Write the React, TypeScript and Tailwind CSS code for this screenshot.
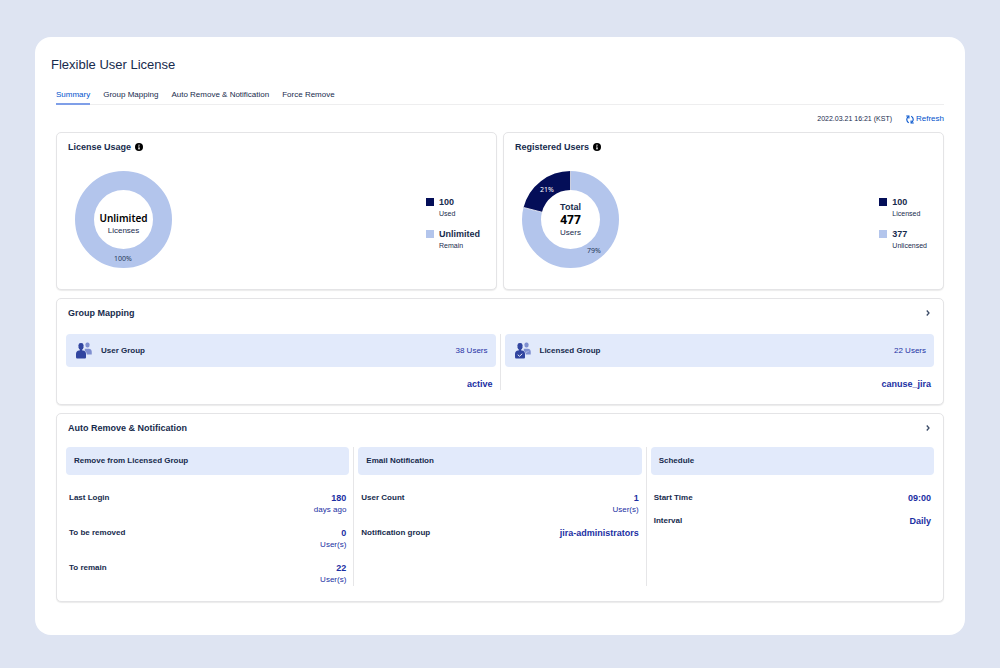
import type { ReactNode } from 'react';

type Slice = { label: string; percent: number; color: string; labelColor: string; x: number; y: number };

const SIZE = 97;
const CENTER = SIZE / 2;
const RADIUS = 39;
const THICKNESS = 19;
const LENGTH = 2 * Math.PI * RADIUS;

function Donut({ slices, title, children }: { slices: Slice[]; title: string; children: ReactNode }) {
  let offset = 0;
  return (
    <div className="relative size-[97px] shrink-0">
      <svg viewBox={`0 0 ${SIZE} ${SIZE}`} className="size-full" role="img" aria-label={title}>
        {slices.map((s) => {
          const start = offset;
          offset += s.percent;
          return (
            <circle
              key={s.label}
              cx={CENTER}
              cy={CENTER}
              r={RADIUS}
              fill="none"
              stroke={s.color}
              strokeWidth={THICKNESS}
              strokeDasharray={`${(s.percent / 100) * LENGTH} ${LENGTH}`}
              transform={`rotate(${-90 + start * 3.6} ${CENTER} ${CENTER})`}
            />
          );
        })}
        {slices.length > 1 &&
          slices.map((s, i) => {
            const before = slices.slice(0, i).reduce((sum, p) => sum + p.percent, 0);
            return (
              <line
                key={s.label}
                x1={CENTER}
                y1={0}
                x2={CENTER}
                y2={20}
                stroke="#fff"
                strokeWidth={0.7}
                transform={`rotate(${before * 3.6} ${CENTER} ${CENTER})`}
              />
            );
          })}
        {slices.map((s) => (
          <text key={s.label} x={s.x} y={s.y} textAnchor="middle" fill={s.labelColor} className="font-['Noto_Sans',sans-serif] text-[7px]">
            {s.label}
          </text>
        ))}
      </svg>
      <div className="absolute inset-0 flex flex-col items-center justify-center">{children}</div>
    </div>
  );
}

function InfoIcon() {
  return (
    <svg viewBox="0 0 16 16" className="size-2" aria-hidden="true">
      <circle cx="8" cy="8" r="8" fill="#000" />
      <circle cx="8" cy="4.3" r="1.3" fill="#fff" />
      <path d="M6.2 6.8h2.7v4.4h1.1v1.3H6v-1.3h1.1V8.1h-.9z" fill="#fff" />
    </svg>
  );
}

function RefreshIcon() {
  return (
    <svg viewBox="0 0 16 18" className="h-[9px] w-2" fill="none" stroke="#0052cc" strokeWidth="2.2" aria-hidden="true">
      <path d="M5.500 15.500C.5 13 .2 6.500 4.800 3" />
      <path d="M.5 2h5.300v5" />
      <path d="M10.500 2.500c5 2.500 5.300 9 .7 12.500" />
      <path d="M15.500 16h-5.300v-5" />
    </svg>
  );
}

function PeopleIcon({ checked = false }: { checked?: boolean }) {
  return (
    <svg viewBox="0 0 32 34" className="h-[17px] w-4" aria-hidden="true">
      <g fill="#7f8fd0">
        <rect x="19" y="1" width="8" height="10" rx="3.5" />
        <path d="M17.5 13.500h8c3.500 0 6 2.500 6 6V25H21.500c0-3.500-1.500-6-4-7.500z" />
      </g>
      <g fill="#3145a0">
        <rect x="5" y="2" width="10" height="13" rx="4.5" />
        <path d="M7.500 14h5v4h-5z" />
        <path d="M6 17h8c3.500 0 6 3 6 7V30c0 2-1 3-3 3H3c-2 0-3-1-3-3v-6c0-4 2.500-7 6-7z" />
      </g>
      {checked && (
        <g fill="none" stroke="#fff" strokeWidth="1.8">
          <path d="m5.500 25.500 3.500 3 5.500-5" />
          <path d="m22 19.500 2 1.500 3.500-3.500" stroke="#dfe6f8" strokeWidth="1.2" />
        </g>
      )}
    </svg>
  );
}

function Card({ children }: { children: ReactNode }) {
  return (
    <section className="rounded-[5px] border border-[#e4e4e6] bg-white px-[9px] pt-2 shadow-[0_1px_1px_rgba(0,0,0,0.08)]">{children}</section>
  );
}

function Legend({ items }: { items: { color: string; value: string; name: string }[] }) {
  return (
    <ul className="flex flex-col gap-2 pt-2">
      {items.map((item) => (
        <li key={item.name} className="flex gap-[5px]">
          <span className={`mt-0.5 size-2 shrink-0 ${item.color}`} />
          <span className="flex flex-col text-[#172b4d]">
            <strong className="text-[9px] leading-[12px]">{item.value}</strong>
            <span className="text-[7px] leading-[12px]">{item.name}</span>
          </span>
        </li>
      ))}
    </ul>
  );
}

function ChartCard({ title, donut, legend }: { title: string; donut: ReactNode; legend: ReactNode }) {
  return (
    <Card>
      <h2 className="flex items-center gap-1 px-0.5 text-[9px] leading-[12px] font-bold">
        {title} <InfoIcon />
      </h2>
      <div className="flex items-center justify-between pt-[18px] pr-[7px] pb-[21px] pl-[9px]">
        {donut}
        {legend}
      </div>
    </Card>
  );
}

function CardHeading({ title }: { title: string }) {
  return (
    <div className="flex items-center justify-between px-0.5 leading-[12px]">
      <h2 className="text-[9px] font-bold">{title}</h2>
      <button type="button" aria-label={`Open ${title}`} className="flex h-3 items-center px-0.5">
        <svg viewBox="0 0 8 12" className="h-1.5 w-1" fill="none" stroke="#3a4a66" strokeWidth="2.6" aria-hidden="true">
          <path d="m1.500 1 4.500 5-4.500 5" />
        </svg>
      </button>
    </div>
  );
}

function Divider() {
  return <div className="mx-1 w-px shrink-0 bg-[#e6e6e8]" />;
}

function Group({ name, count, value, checked }: { name: string; count: string; value: string; checked?: boolean }) {
  return (
    <div className="min-w-0 flex-1">
      <div className="flex h-[33px] items-center rounded-sm bg-[#e2eafb] pr-2 pl-[10px]">
        <PeopleIcon checked={checked} />
        <h3 className="ml-[9px] flex-1 text-[8px] font-bold">{name}</h3>
        <span className="text-[8px] text-[#1f32a5]">{count}</span>
      </div>
      <p className="pt-[11px] pr-[3px] text-right text-[9px] leading-[12px] font-bold text-[#1b2fa3]">{value}</p>
    </div>
  );
}

function Panel({ title, rows }: { title: string; rows: { label: string; value: string; unit?: string }[] }) {
  return (
    <div className="min-w-0 flex-1">
      <h3 className="flex h-7 items-center rounded-sm bg-[#e2eafb] px-2 text-[8px] font-bold">{title}</h3>
      <dl className="flex flex-col gap-[11px] px-[3px] pt-[17px] leading-[12px]">
        {rows.map((row) => (
          <div key={row.label} className="flex justify-between">
            <dt className="text-[8px] font-bold">{row.label}</dt>
            <dd className="flex flex-col text-right text-[#1b2fa3]">
              <strong className="text-[9px]">{row.value}</strong>
              {row.unit && <span className="text-[8px]">{row.unit}</span>}
            </dd>
          </div>
        ))}
      </dl>
    </div>
  );
}

const tabs = ['Summary', 'Group Mapping', 'Auto Remove & Notification', 'Force Remove'];

export default function App() {
  return (
    <div className="min-h-screen bg-[#dee4f2] px-[35px] pt-[37px] pb-[33px] font-['Liberation_Sans',Arial,sans-serif] text-[#172b4d]">
      <main className="rounded-2xl bg-white px-[21px] pt-5 pb-[33px]">
        <h1 className="-ml-[5px] text-[13px] leading-[16px]">Flexible User License</h1>
        <nav className="mt-4 flex gap-[13px] border-b border-[#eeeeef] text-[8px] leading-[12px]">
          {tabs.map((tab, i) => (
            <a
              key={tab}
              href="#"
              aria-current={i === 0 ? 'page' : undefined}
              className={i === 0 ? '-mb-px border-b-2 border-[#7f9fe8] pb-[2px] text-[#0052cc]' : 'pb-[3px]'}
            >
              {tab}
            </a>
          ))}
        </nav>
        <div className="flex items-center justify-end gap-[14px] pt-2 pb-[7px] leading-[12px]">
          <time className="text-[7px]">2022.03.21 16:21 (KST)</time>
          <button type="button" className="flex items-center gap-0.5 text-[8px] text-[#0052cc]">
            <RefreshIcon /> Refresh
          </button>
        </div>
        <div className="flex flex-col gap-2">
          <div className="grid grid-cols-2 gap-1.5">
            <ChartCard
              title="License Usage"
              donut={
                <Donut title="License usage" slices={[{ label: '100%', percent: 100, color: '#b3c5ec', labelColor: '#253858', x: 48, y: 90 }]}>
                  <strong className="pt-2 font-['Noto_Sans',sans-serif] text-[10px] leading-[14px] font-semibold text-black">Unlimited</strong>
                  <span className="text-[8px] leading-[12px]">Licenses</span>
                </Donut>
              }
              legend={
                <Legend
                  items={[
                    { color: 'bg-[#040e58]', value: '100', name: 'Used' },
                    { color: 'bg-[#b3c5ec]', value: 'Unlimited', name: 'Remain' },
                  ]}
                />
              }
            />
            <ChartCard
              title="Registered Users"
              donut={
                <Donut
                  title="Registered users"
                  slices={[
                    { label: '79%', percent: 79, color: '#b3c5ec', labelColor: '#253858', x: 72, y: 82 },
                    { label: '21%', percent: 21, color: '#040e58', labelColor: '#ffffff', x: 25, y: 21 },
                  ]}
                >
                  <strong className="text-[9px] leading-[12px]">Total</strong>
                  <strong className="font-['Noto_Sans',sans-serif] text-[12px] leading-[14px] text-black">477</strong>
                  <span className="text-[8px] leading-[12px]">Users</span>
                </Donut>
              }
              legend={
                <Legend
                  items={[
                    { color: 'bg-[#040e58]', value: '100', name: 'Licensed' },
                    { color: 'bg-[#b3c5ec]', value: '377', name: 'Unlicensed' },
                  ]}
                />
              }
            />
          </div>
          <Card>
            <CardHeading title="Group Mapping" />
            <div className="flex pt-[15px] pb-[14px]">
              <Group name="User Group" count="38 Users" value="active" />
              <Divider />
              <Group name="Licensed Group" count="22 Users" value="canuse_jira" checked />
            </div>
          </Card>
          <Card>
            <CardHeading title="Auto Remove & Notification" />
            <div className="flex pt-[13px] pb-[15px]">
              <Panel
                title="Remove from Licensed Group"
                rows={[
                  { label: 'Last Login', value: '180', unit: 'days ago' },
                  { label: 'To be removed', value: '0', unit: 'User(s)' },
                  { label: 'To remain', value: '22', unit: 'User(s)' },
                ]}
              />
              <Divider />
              <Panel
                title="Email Notification"
                rows={[
                  { label: 'User Count', value: '1', unit: 'User(s)' },
                  { label: 'Notification group', value: 'jira-administrators' },
                ]}
              />
              <Divider />
              <Panel
                title="Schedule"
                rows={[
                  { label: 'Start Time', value: '09:00' },
                  { label: 'Interval', value: 'Daily' },
                ]}
              />
            </div>
          </Card>
        </div>
      </main>
    </div>
  );
}
